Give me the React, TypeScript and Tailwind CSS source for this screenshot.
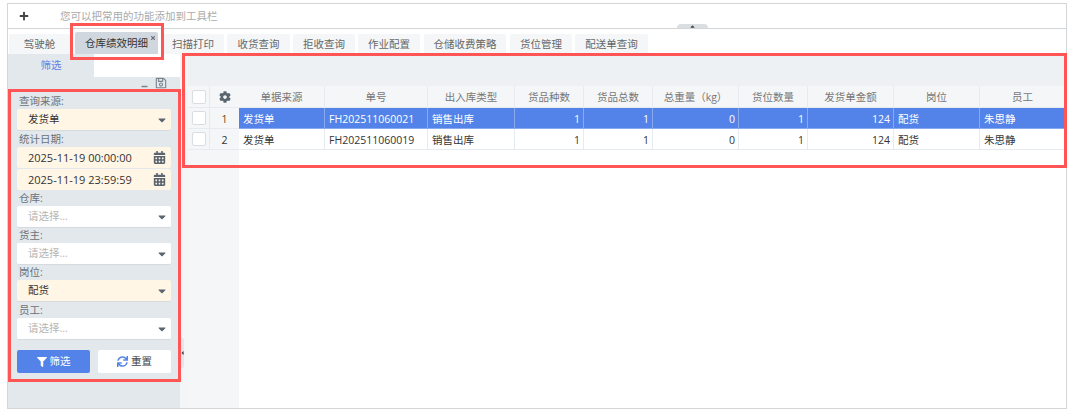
import { FaCalendarAlt, FaCaretDown, FaCaretLeft, FaCaretUp, FaCog, FaFilter, FaMinus, FaPlus, FaRegSave, FaSync, FaTimes } from "react-icons/fa";

const tabs = [
  { name: "驾驶舱", w: "w-[61px]", ml: "ml-[1px]" },
  { name: "仓库绩效明细", w: "w-[83px]", ml: "ml-[5px]", active: true },
  { name: "扫描打印", w: "w-[62px]", ml: "ml-[4px]" },
  { name: "收货查询", w: "w-[63px]", ml: "ml-[3px]" },
  { name: "拒收查询", w: "w-[62px]", ml: "ml-[3px]" },
  { name: "作业配置", w: "w-[62px]", ml: "ml-[3px]" },
  { name: "仓储收费策略", w: "w-[82px]", ml: "ml-[4px]" },
  { name: "货位管理", w: "w-[62px]", ml: "ml-[4px]" },
  { name: "配送单查询", w: "w-[73px]", ml: "ml-[3px]" },
];

const columns = [
  { title: "单据来源", w: "w-[86px]", align: "text-left" },
  { title: "单号", w: "w-[103px]", align: "text-left" },
  { title: "出入库类型", w: "w-[87px]", align: "text-left" },
  { title: "货品种数", w: "w-[69px]", align: "text-right" },
  { title: "货品总数", w: "w-[69px]", align: "text-right" },
  { title: "总重量（kg）", w: "w-[86px]", align: "text-right" },
  { title: "货位数量", w: "w-[69px]", align: "text-right" },
  { title: "发货单金额", w: "w-[86px]", align: "text-right" },
  { title: "岗位", w: "w-[86px]", align: "text-left" },
  { title: "员工", w: "w-[86px]", align: "text-left" },
];

const rows = [
  ["发货单", "FH202511060021", "销售出库", "1", "1", "0", "1", "124", "配货", "朱思静"],
  ["发货单", "FH202511060019", "销售出库", "1", "1", "0", "1", "124", "配货", "朱思静"],
];

const Select = ({ value, filled }: { value: string; filled?: boolean }) => (
  <div className={`flex h-[22px] items-center justify-between rounded-[2px] border-b border-[#d5dade] pl-[11px] pr-[3px] ${filled ? "bg-[#fff6e6] text-[#333]" : "bg-white text-[#b5b5b5]"}`}>
    <span>{value}</span>
    <FaCaretDown className="text-[12px] text-[#5b6570]" />
  </div>
);

const DateBox = ({ value }: { value: string }) => (
  <div className="flex h-[21px] items-center justify-between rounded-[2px] bg-[#fff6e6] pl-[11px] pr-[5px] text-[11px] text-[#333]">
    <span>{value}</span>
    <FaCalendarAlt className="text-[13px] text-[#5b6570]" />
  </div>
);

const Label = ({ children }: { children: string }) => (
  <div className="flex h-[15px] items-center pl-[2px] text-[#6b7278]">{children}</div>
);

export default function App() {
  return (
    <div className="relative h-[415px] w-[1076px] overflow-hidden bg-white pl-[7px] pt-[3px] text-[10.5px] leading-none text-[#333] [font-family:'Open_Sans','Noto_Sans_CJK_SC',sans-serif]">
      <div className="flex h-[406px] w-[1060px] flex-col border border-[#d2d6d9] bg-white">
        {/* toolbar */}
        <div className="relative flex h-[25px] shrink-0 items-center border-b border-[#d2d6d9] pl-[11px]">
          <FaPlus className="text-[10px] text-[#444]" />
          <span className="ml-[31px] text-[#aaa]">您可以把常用的功能添加到工具栏</span>
          <div className="absolute bottom-0 left-[669px] flex h-[4px] w-[31px] items-center justify-center rounded-t-[4px] bg-[#dcdfe1]">
            <FaCaretUp className="text-[7px] text-[#444]" />
          </div>
        </div>

        {/* tabs */}
        <div className="flex h-[25px] shrink-0 items-end">
          {tabs.map((t) => (
            <div
              key={t.name}
              className={`relative flex items-center justify-center rounded-t-[2px] ${t.w} ${t.ml} ${t.active ? "h-[22px] bg-[#d0d7de] text-[#333]" : "h-[20px] bg-[#f4f6f7] text-[#666]"}`}
            >
              {t.name}
              {t.active && <FaTimes className="absolute right-[2px] top-[3px] text-[6px] text-[#667]" />}
            </div>
          ))}
        </div>

        <div className="flex min-h-0 flex-1">
          {/* left panel */}
          <div className="flex w-[172px] shrink-0 flex-col bg-[#e3e8ec]">
            <div className="flex h-[23px] shrink-0">
              <div className="flex w-[86px] items-center justify-center text-[#5f82e8]">筛选</div>
              <div className="w-[86px] bg-white" />
            </div>
            <div className="flex h-[12px] shrink-0 items-center justify-end gap-[7px] pr-[13px] text-[#7b858e]">
              <FaMinus className="mt-[6px] text-[7px]" />
              <FaRegSave className="text-[12px]" />
            </div>
            <div className="flex flex-col pl-[9px] pr-[9px] pt-[5px]">
              <Label>查询来源:</Label>
              <Select value="发货单" filled />
              <div className="mt-[1px]"><Label>统计日期:</Label></div>
              <DateBox value="2025-11-19 00:00:00" />
              <div className="mt-[1px]"><DateBox value="2025-11-19 23:59:59" /></div>
              <div className="mt-[1px]"><Label>仓库:</Label></div>
              <Select value="请选择..." />
              <Label>货主:</Label>
              <Select value="请选择..." />
              <Label>岗位:</Label>
              <Select value="配货" filled />
              <div className="mt-[1px]"><Label>员工:</Label></div>
              <Select value="请选择..." />
              <div className="mt-[10px] flex justify-between">
                <button className="flex h-[23px] w-[73px] items-center justify-center gap-[3px] rounded-[2px] bg-[#5383e8] text-white">
                  <FaFilter className="text-[10px]" />
                  筛选
                </button>
                <button className="flex h-[23px] w-[73px] items-center justify-center gap-[3px] rounded-[2px] bg-white text-[#444]">
                  <FaSync className="text-[11px] text-[#5383e8]" />
                  重置
                </button>
              </div>
            </div>
          </div>

          {/* splitter */}
          <div className="relative flex w-[8px] shrink-0 bg-[#f3f5f6]">
            <div className="absolute left-[1px] top-[284px] flex h-[30px] w-[3px] items-center justify-center rounded-r-[2px] bg-[#e4e7e9]">
              <FaCaretLeft className="text-[6px] text-[#444]" />
            </div>
          </div>

          {/* grid */}
          <div className="flex min-w-0 flex-1 flex-col">
            <div className="h-[32px] shrink-0 bg-[#eef1f3]" />
            <div className="flex min-h-0 flex-1">
              <div className="flex w-[51px] shrink-0 flex-col bg-[#f4f6f7]">
                <div className="flex h-[22px] border-b border-[#e6ebf0]">
                  <div className="flex w-[22px] items-center justify-center border-r border-[#e6ebf0]">
                    <div className="h-[14px] w-[14px] rounded-[2px] border border-[#d8dde1] bg-white" />
                  </div>
                  <div className="flex flex-1 items-center justify-center">
                    <FaCog className="text-[12px] text-[#5b6570]" />
                  </div>
                </div>
                {rows.map((_, i) => (
                  <div key={i} className="flex h-[21px] border-b border-[#e6ebf0]">
                    <div className="flex w-[22px] items-center justify-center border-r border-[#e6ebf0]">
                      <div className="h-[14px] w-[14px] rounded-[2px] border border-[#d8dde1] bg-white" />
                    </div>
                    <div className={`flex flex-1 items-center justify-center pt-[2px] ${i === 0 ? "text-[#6b4a10]" : "text-[#333]"}`}>{i + 1}</div>
                  </div>
                ))}
              </div>
              <div className="flex flex-1 flex-col">
                <div className="flex h-[22px] bg-[#f4f6f7]">
                  {columns.map((c) => (
                    <div key={c.title} className={`flex items-center justify-center border-b border-r border-[#e6ebf0] pt-[2px] text-[#777] ${c.w}`}>
                      {c.title}
                    </div>
                  ))}
                </div>
                {rows.map((r, i) => (
                  <div key={i} className={`flex h-[21px] ${i === 0 ? "bg-[#5383e8] text-white" : "bg-white text-[#333]"}`}>
                    {r.map((v, j) => (
                      <div
                        key={j}
                        className={`flex items-center border-b border-r pl-[4px] pr-[3px] pt-[2px] ${i === 0 ? "border-[#8aaaf0]" : "border-[#e6ebf0]"} ${columns[j].w} ${columns[j].align === "text-right" ? "justify-end" : "justify-start"}`}
                      >
                        {v}
                      </div>
                    ))}
                  </div>
                ))}
              </div>
            </div>
          </div>
        </div>
      </div>

      {/* red highlight boxes drawn over the screenshot */}
      <div className="pointer-events-none absolute left-[70px] top-[23px] h-[37px] w-[94px] border-[3px] border-[#ff5555]" />
      <div className="pointer-events-none absolute left-[8px] top-[89px] h-[293px] w-[173px] border-[3px] border-[#ff5555]" />
      <div className="pointer-events-none absolute left-[182px] top-[53px] h-[115px] w-[885px] border-[3px] border-[#ff5555]" />
    </div>
  );
}
